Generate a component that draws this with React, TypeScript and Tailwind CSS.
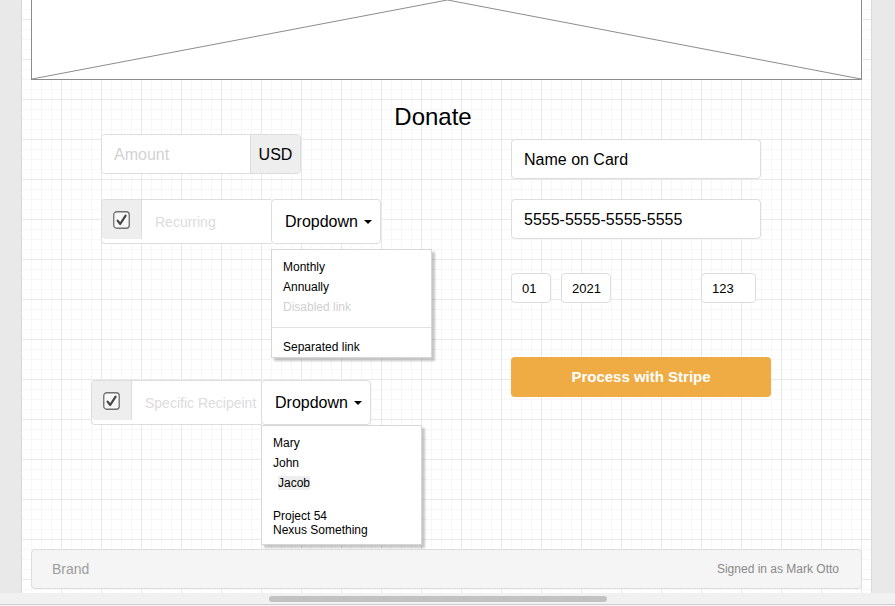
import React from "react";

function CheckIcon() {
  return (
    <svg width="17" height="18" viewBox="0 0 17 18">
      <rect x="0.75" y="0.75" width="15.5" height="16.5" rx="3" fill="#f8f8f8" stroke="#707070" strokeWidth="1.3" />
      <path d="M4.6 9.6 L7.2 13 L12.6 4.6" fill="none" stroke="#454545" strokeWidth="2.2" strokeLinecap="round" strokeLinejoin="round" />
    </svg>
  );
}

function Caret() {
  return <span className="w-0 h-0 border-x-[4px] border-x-transparent border-t-[4px] border-t-black" />;
}

function CheckGroup({ label }: { label: string }) {
  return (
    <div className="flex h-[45px]">
      <div className="flex w-[170px] h-[45px] border border-r-0 border-[#dddddd] rounded-l-[4px] bg-white">
        <div className="w-[40px] h-[39px] shrink-0 bg-[#eeeeee] border-r border-[#dddddd] rounded-tl-[4px] rounded-bl-[4px] flex items-center justify-center">
          <CheckIcon />
        </div>
        <span className="ml-[13px] self-center pt-[1px] text-[14px] text-[#dcdcdc] whitespace-nowrap">{label}</span>
      </div>
      <div className="w-[110px] h-[45px] border border-[#dddddd] rounded-[4px] bg-white flex items-center pl-[13px] gap-[6px] text-[16px] text-black">
        <span>Dropdown</span>
        <Caret />
      </div>
    </div>
  );
}

export default function App() {
  return (
    <div className="w-[895px] h-[606px] overflow-hidden bg-[#e9e9e9] font-['Liberation_Sans',Arial,sans-serif] flex flex-col">
      <div className="flex h-[593px]">
        <div className="w-[22px] h-full bg-[#e9e9e9] border-r border-[#d8d8d8]" />
        <div className="w-[849px] h-full flex flex-col bg-white [background-image:linear-gradient(to_right,#e9e9e9_1px,transparent_1px),linear-gradient(to_bottom,#e9e9e9_1px,transparent_1px),linear-gradient(to_right,#f7f7f7_1px,transparent_1px),linear-gradient(to_bottom,#f7f7f7_1px,transparent_1px)] [background-size:40px_40px,40px_40px,10px_10px,10px_10px] [background-position:39px_19px,39px_19px,9px_9px,9px_9px]">
          {/* image placeholder */}
          <div className="ml-[9px] w-[831px] h-[80px] border-x border-b border-[#8c8c8c] bg-white">
            <svg className="w-full h-full block" viewBox="0 0 829 79" preserveAspectRatio="none">
              <polyline points="0,79 415.5,0 829,79" fill="none" stroke="#8c8c8c" strokeWidth="1" />
            </svg>
          </div>

          <div className="ml-[69px] w-[684px]">
            <h1 className="mt-[20px] h-[34px] leading-[34px] text-center text-[24px] text-black">Donate</h1>
            <div className="flex items-start">
              {/* left column */}
              <div className="w-[420px] flex flex-col">
                <div className="ml-[10px] flex w-[200px] h-[40px] border border-[#dddddd] rounded-[4px] overflow-hidden bg-white">
                  <input
                    placeholder="Amount"
                    className="flex-1 min-w-0 pl-[12px] pt-[1px] text-[16px] outline-none bg-white placeholder:text-[#d2d2d2]"
                  />
                  <div className="w-[50px] pt-[1px] bg-[#eeeeee] border-l border-[#dddddd] flex items-center justify-center text-[16px] text-black">
                    USD
                  </div>
                </div>

                <div className="ml-[10px] mt-[25px]">
                  <CheckGroup label="Recurring" />
                </div>

                <div className="ml-[180px] mt-[5px] w-[161px] border border-[#d6d6d6] bg-white pt-[7px] shadow-[3px_3px_2px_rgba(0,0,0,0.22)] text-[12px]">
                  <div className="h-[20px] leading-[20px] px-[11px] text-black">Monthly</div>
                  <div className="h-[20px] leading-[20px] px-[11px] text-black">Annually</div>
                  <div className="h-[20px] leading-[20px] px-[11px] text-[#d0d0d0]">Disabled link</div>
                  <div className="mt-[10px] mb-[9px] h-px bg-[#e2e2e2]" />
                  <div className="h-[20px] leading-[20px] px-[11px] text-black">Separated link</div>
                </div>

                <div className="mt-[22px]">
                  <CheckGroup label="Specific Recipeint" />
                </div>

                <div className="ml-[170px] w-[161px] border border-[#d6d6d6] bg-white pt-[7px] pb-[7px] shadow-[3px_3px_2px_rgba(0,0,0,0.22)] text-[12px] text-black">
                  <div className="h-[20px] leading-[20px] px-[11px]">Mary</div>
                  <div className="h-[20px] leading-[20px] px-[11px]">John</div>
                  <div className="h-[20px] leading-[20px] px-[11px]">
                    <span className="ml-[5px] bg-[#eeeeee]">Jacob</span>
                  </div>
                  <div className="mt-[16px] leading-[14px] px-[11px]">Project 54</div>
                  <div className="leading-[14px] px-[11px]">Nexus Something</div>
                </div>
              </div>

              {/* right column */}
              <div className="mt-[5px] flex flex-col">
                <input
                  defaultValue="Name on Card"
                  className="w-[250px] h-[40px] border border-[#dddddd] rounded-[4px] pl-[12px] pt-[1px] text-[16px] text-black bg-white outline-none"
                />
                <input
                  defaultValue="5555-5555-5555-5555"
                  className="mt-[20px] w-[250px] h-[40px] border border-[#dddddd] rounded-[4px] pl-[12px] pt-[1px] text-[16px] text-black bg-white outline-none"
                />
                <div className="mt-[34px] flex">
                  <input
                    defaultValue="01"
                    className="w-[40px] h-[30px] border border-[#dddddd] rounded-[4px] pl-[10px] pt-[1px] text-[13px] text-black bg-white outline-none"
                  />
                  <input
                    defaultValue="2021"
                    className="ml-[10px] w-[50px] h-[30px] border border-[#dddddd] rounded-[4px] pl-[10px] pt-[1px] text-[13px] text-black bg-white outline-none"
                  />
                  <input
                    defaultValue="123"
                    className="ml-[90px] w-[55px] h-[30px] border border-[#dddddd] rounded-[4px] pl-[10px] pt-[1px] text-[13px] text-black bg-white outline-none"
                  />
                </div>
                <button className="mt-[54px] w-[260px] h-[40px] rounded-[4px] bg-[#efac44] text-white text-[15px] font-bold flex items-center justify-center">
                  Process with Stripe
                </button>
              </div>
            </div>
          </div>

          {/* footer navbar */}
          <div className="mt-auto mb-[4px] ml-[9px] w-[831px] h-[40px] shrink-0 border border-[#dddddd] rounded-[4px] bg-[#f5f5f5] flex items-center justify-between pl-[20px] pr-[22px]">
            <span className="text-[14px] text-[#9d9d9d]">Brand</span>
            <span className="text-[12px] text-[#8a8a8a]">Signed in as Mark Otto</span>
          </div>
        </div>
        <div className="w-[24px] h-full bg-[#e9e9e9] border-l border-[#dcdcdc]" />
      </div>

      {/* horizontal scrollbar */}
      <div className="h-[11px] bg-[#f1f1f1] pt-[3px]">
        <div className="ml-[269px] w-[338px] h-[6px] rounded-full bg-[#c2c2c2]" />
      </div>
      <div className="h-[2px] border-t border-[#cfcfcf] bg-[#f4f4f4]" />
    </div>
  );
}
